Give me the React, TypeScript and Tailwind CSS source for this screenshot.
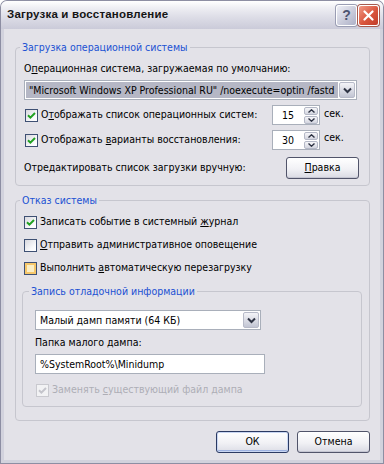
import React from "react";

const Tick = ({ color }: { color: string }) => (
  <svg width="9" height="9" viewBox="0 0 9 9">
    <path d="M1 4.2 L3.4 6.6 L8 2" fill="none" stroke={color} strokeWidth="2" />
  </svg>
);

function Check({ checked = false, hover = false, disabled = false }: { checked?: boolean; hover?: boolean; disabled?: boolean }) {
  const cls = disabled
    ? "w-[13px] h-[13px] shrink-0 border border-[#c9c9cf] bg-[#f2f2f4] flex items-center justify-center"
    : hover
    ? "w-[13px] h-[13px] shrink-0 border border-[#3e5073] bg-[#fbeec5] shadow-[inset_0_0_0_2px_#f6c76a] flex items-center justify-center"
    : "w-[13px] h-[13px] shrink-0 border border-[#3e5073] bg-[linear-gradient(135deg,#d8d8de,#fafafc_70%,#ffffff)] flex items-center justify-center";
  return <span className={cls}>{checked && <Tick color={disabled ? "#c4c4cb" : "#21a121"} />}</span>;
}

const Chevron = () => (
  <svg width="9" height="7" viewBox="0 0 9 7">
    <path d="M1 1.5 L4.5 5 L8 1.5" fill="none" stroke="#2f3444" strokeWidth="2" />
  </svg>
);

function DropBtn() {
  return (
    <span className="w-[16px] h-[16px] shrink-0 rounded-[2px] border border-[#b7bac8] bg-[linear-gradient(to_bottom,#f4f4f8,#d6d8e2_60%,#c2c5d3)] flex items-center justify-center">
      <Chevron />
    </span>
  );
}

function Spin({ value }: { value: string }) {
  return (
    <div className="w-[48px] h-[20px] shrink-0 border border-[#a9afba] bg-white flex items-center pl-[9px] pr-[1px]">
      <span className="flex-1 leading-[14px]">{value}</span>
      <div className="flex flex-col gap-[1px]">
        <span className="w-[14px] h-[8px] rounded-[2px] border border-[#b4b8c6] bg-[linear-gradient(to_bottom,#f6f6f9,#d3d5df)] flex items-center justify-center">
          <svg width="7" height="4" viewBox="0 0 7 4"><path d="M0.5 3.5 L3.5 0.8 L6.5 3.5" fill="none" stroke="#2f3444" strokeWidth="1.4" /></svg>
        </span>
        <span className="w-[14px] h-[8px] rounded-[2px] border border-[#b4b8c6] bg-[linear-gradient(to_bottom,#f6f6f9,#d3d5df)] flex items-center justify-center">
          <svg width="7" height="4" viewBox="0 0 7 4"><path d="M0.5 0.5 L3.5 3.2 L6.5 0.5" fill="none" stroke="#2f3444" strokeWidth="1.4" /></svg>
        </span>
      </div>
    </div>
  );
}

function Button({ children, def = false }: { children: React.ReactNode; def?: boolean }) {
  const cls = def
    ? "w-[73px] h-[22px] shrink-0 rounded-[3px] border border-[#2b3a63] bg-[linear-gradient(to_bottom,#ffffff,#f1f1f5_55%,#dcdde6)] shadow-[inset_0_0_0_1px_#c9d6f2,inset_0_-2px_0_#9db2e2] flex items-center justify-center"
    : "w-[73px] h-[22px] shrink-0 rounded-[3px] border border-[#51546a] bg-[linear-gradient(to_bottom,#ffffff,#f1f1f5_55%,#d9dae3)] shadow-[inset_0_-1px_0_#c5c6d2] flex items-center justify-center";
  return <div className={cls}>{children}</div>;
}

export default function App() {
  return (
    <div className="w-[384px] h-[464px] bg-[#8d8ea3] p-[1px] rounded-t-[7px] font-['DejaVu_Sans_Condensed','Liberation_Sans',sans-serif] text-[10.5px] text-black">
      <div className="w-full h-full flex flex-col rounded-t-[6px] overflow-hidden bg-[#d2d2dd]">
        {/* title bar */}
        <div className="h-[28px] shrink-0 flex items-center pl-[6px] pr-[4px] bg-[linear-gradient(to_bottom,#ffffff_0%,#eeeef3_25%,#dcdce6_60%,#cbcbd9_100%)]">
          <span className="flex-1 font-['Liberation_Sans',sans-serif] font-bold text-[11.5px] text-[#151515] tracking-[0.2px]">Загрузка и восстановление</span>
          <div className="flex gap-[1px] mt-[1px]">
            <span className="w-[21px] h-[21px] rounded-[3px] border border-white bg-[linear-gradient(135deg,#eeeff6,#c6c8d8_60%,#aeb1c8)] shadow-[0_0_0_1px_#9a9db3] flex items-center justify-center font-['Liberation_Sans',sans-serif] font-bold text-[14px] text-[#4d5570]">?</span>
            <span className="w-[21px] h-[21px] rounded-[3px] border border-white bg-[linear-gradient(135deg,#f19a86,#d9553d_55%,#c13d2a)] shadow-[0_0_0_1px_#a65a4e] flex items-center justify-center">
              <svg width="11" height="11" viewBox="0 0 11 11"><path d="M1.5 1.5 L9.5 9.5 M9.5 1.5 L1.5 9.5" stroke="#fff" strokeWidth="2.2" strokeLinecap="round" /></svg>
            </span>
          </div>
        </div>
        {/* client */}
        <div className="flex-1 min-w-0 mx-[3px] mb-[3px] bg-[#e3e2e8] flex flex-col pl-[11px] pr-[10px]">
          {/* group 1 */}
          <fieldset className="min-w-0 mt-[12px] border border-[#c6c6ce] rounded-[4px] pl-[8px] pr-[10px] pb-[6px]">
            <legend className="ml-[-4px] px-[2px] leading-[13px] text-[#2151d3]">Загрузка операционной системы</legend>
            <div className="mt-[7px] h-[14px] leading-[14px]">О<span className="underline">п</span>ерационная система, загружаемая по умолчанию:</div>
            <div className="mt-[5px] h-[20px] mr-[2px] border border-[#a9afba] bg-white flex items-center p-[1px]">
              <span className="flex-1 min-w-0 h-full bg-[#b5b7c5] whitespace-nowrap leading-[16px] pl-[3px]">"Microsoft Windows XP Professional RU" /noexecute=optin /fastd</span>
              <span className="ml-[1px] shrink-0"><DropBtn /></span>
            </div>
            <div className="mt-[5px] h-[20px] flex items-center">
              <div className="w-[248px] shrink-0 flex items-center gap-[3px] pl-[1px]">
                <Check checked />
                <span>О<span className="underline">т</span>ображать список операционных систем:</span>
              </div>
              <Spin value="15" />
              <span className="ml-[4px] -mt-[2px]">сек.</span>
            </div>
            <div className="mt-[5px] h-[20px] flex items-center">
              <div className="w-[248px] shrink-0 flex items-center gap-[3px] pl-[1px]">
                <Check checked />
                <span>Отображать <span className="underline">в</span>арианты восстановления:</span>
              </div>
              <Spin value="30" />
              <span className="ml-[4px] -mt-[4px]">сек.</span>
            </div>
            <div className="mt-[7px] flex items-center justify-between">
              <span>Отредактировать список загрузки вручную:</span>
              <Button><span className="underline">П</span>равка</Button>
            </div>
          </fieldset>

          {/* group 2 */}
          <fieldset className="min-w-0 mt-[8px] border border-[#c6c6ce] rounded-[4px] pl-[6px] pr-[7px] pb-[13px]">
            <legend className="ml-[-2px] px-[2px] leading-[13px] text-[#2151d3]">Отказ системы</legend>
            <div className="mt-[7px] h-[16px] flex items-center gap-[3px] pl-[2px]">
              <Check checked />
              <span>Записать событие в системный <span className="underline">ж</span>урнал</span>
            </div>
            <div className="mt-[7px] h-[16px] flex items-center gap-[3px] pl-[2px]">
              <Check />
              <span><span className="underline">О</span>тправить административное оповещение</span>
            </div>
            <div className="mt-[7px] h-[16px] flex items-center gap-[3px] pl-[2px]">
              <Check hover />
              <span>Выполнить <span className="underline">а</span>втоматическую перезагрузку</span>
            </div>

            <fieldset className="min-w-0 mt-[9px] border border-[#c6c6ce] rounded-[4px] pl-[12px] pr-[8px] pb-[8px]">
              <legend className="ml-[-6px] px-[2px] leading-[13px] text-[#2151d3]">Запись отладочной информации</legend>
              <div className="mt-[12px] w-[226px] h-[20px] border border-[#a9afba] bg-white flex items-center p-[1px]">
                <span className="flex-1 pl-[3px] leading-[16px]">Малый дамп памяти (64 КБ)</span>
                <DropBtn />
              </div>
              <div className="mt-[5px] h-[14px] leading-[14px]">Папка малого дампа:</div>
              <div className="mt-[5px] w-[230px] h-[20px] border border-[#a9afba] bg-white flex items-center pl-[4px] leading-[16px]">%SystemRoot%\Minidump</div>
              <div className="mt-[8px] h-[16px] flex items-center gap-[3px] pl-[1px] text-[#aeaeb6]">
                <Check checked disabled />
                <span>Заменять <span className="underline">с</span>уществующий файл дампа</span>
              </div>
            </fieldset>
          </fieldset>

          <div className="mt-[10px] flex justify-end gap-[8px]">
            <Button def>ОК</Button>
            <Button>Отмена</Button>
          </div>
        </div>
      </div>
    </div>
  );
}
